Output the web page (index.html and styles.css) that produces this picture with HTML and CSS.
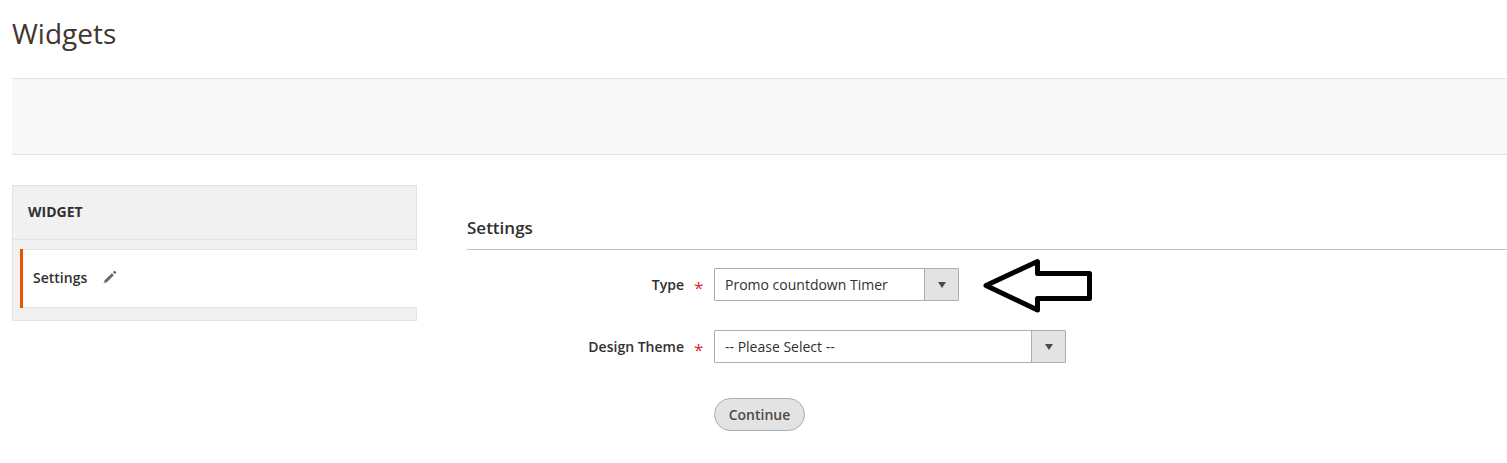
FILE: index.html
```html
<!DOCTYPE html>
<html lang="en">
<head>
<meta charset="utf-8">
<title>Widgets</title>
<link rel="stylesheet" href="styles.css">
</head>
<body>
<header class="page-header"><h1 class="page-title">Widgets</h1></header>
<div class="page-actions"></div>
<div class="columns">
  <nav class="side-nav">
    <div class="side-title">WIDGET</div>
    <a class="side-item">
      <span class="side-label">Settings</span>
      <svg class="pencil" width="14" height="14" viewBox="0 0 14 14"><path d="M0.6 13.4 1.4 10.6 8.9 3.2 10.9 5.2 3.5 12.5ZM9.9 2.2 11 1.1Q11.5.7 12 1.1L13 2.1Q13.4 2.5 13 3L11.900 4.200Z"/><path class="tip" d="M1.2 12.8 1.8 11.2 2.9 12.2Z"/></svg>
    </a>
  </nav>
  <main class="content">
    <h2 class="section-title">Settings</h2>
    <div class="field">
      <label class="label">Type</label><span class="required">*</span>
      <div class="select select-type"><span class="value">Promo countdown Timer</span><span class="toggle"><i class="caret"></i></span></div>
      <svg class="arrow" width="110" height="57" viewBox="0 0 110 57"><path d="M4 29.500 55.500 5.500V17.500H107.500V42.500H55.500V54Z"/></svg>
    </div>
    <div class="field">
      <label class="label">Design Theme</label><span class="required">*</span>
      <div class="select select-theme"><span class="value">-- Please Select --</span><span class="toggle"><i class="caret"></i></span></div>
    </div>
    <button class="continue" type="button">Continue</button>
  </main>
</div>
</body>
</html>
```
FILE: styles.css
```css
* { box-sizing: border-box; }
body {
  margin: 0;
  background: #fff;
  color: #303030;
  font: 14px/20px "Open Sans", sans-serif;
  overflow: hidden;
}
.page-header { height: 78px; padding: 14px 0 0 12px; }
.page-title { margin: 0; font-size: 28px; font-weight: 400; line-height: 38px; color: #41362f; }
.page-actions {
  height: 77px;
  margin-left: 12px;
  background: #f8f8f8;
  border-top: 1px solid #e3e3e3;
  border-bottom: 1px solid #e3e3e3;
}
.columns { display: flex; gap: 50px; padding: 30px 0 0 12px; }
.side-nav {
  width: 405px;
  height: 136px;
  background: #f1f1f1;
  border: 1px solid #e3e3e3;
}
.side-title {
  height: 54px;
  padding: 17px 15px 0;
  border-bottom: 1px solid #e3e3e3;
  font-weight: 700;
  font-size: 14px;
  line-height: 18px;
}
.side-item {
  position: relative;
  display: flex;
  align-items: center;
  height: 59px;
  margin: 9px -1px 0 7px;
  padding: 0 0 2px 13px;
  background: #fff;
  border: solid #e3e3e3;
  border-width: 1px 0;
  font-weight: 600;
}
.side-item::before {
  content: "";
  position: absolute;
  inset: -1px auto -1px 0;
  width: 3px;
  background: #eb5202;
}
.pencil { margin: -1px 0 0 16px; fill: #666; }
.pencil .tip { fill: #fff; }
.content { flex: 1; padding-top: 32px; }
.section-title {
  height: 33px;
  margin: 0 0 18px;
  border-bottom: 1px solid #cac3b4;
  font-size: 17px;
  font-weight: 600;
  line-height: 22px;
}
.field { display: flex; align-items: center; height: 33px; margin-bottom: 29px; }
.label { width: 217px; text-align: right; font-weight: 600; }
.required { width: 30px; padding: 6px 0 0 10px; color: #e22626; font-size: 17px; }
.select {
  display: flex;
  height: 33px;
  border: 1px solid #adadad;
  border-radius: 1px;
}
.select-type { width: 245px; }
.select-theme { width: 352px; }
.value { flex: 1; padding: 6px 0 0 10px; }
.toggle {
  display: flex;
  align-items: center;
  justify-content: center;
  width: 34px;
  background: #e3e3e3;
  border-left: 1px solid #adadad;
}
.caret { border: 4px solid transparent; border-top: 6px solid #514943; border-bottom: 0; }
.arrow { margin-left: 23px; }
.arrow path { fill: none; stroke: #000; stroke-width: 5; stroke-linejoin: round; }
.continue {
  display: block;
  width: 91px;
  height: 33px;
  margin: 35px 0 0 247px;
  padding: 0;
  background: #e3e3e3;
  border: 1px solid #adadad;
  border-radius: 17px;
  color: #514943;
  font: 600 14px/20px "Open Sans", sans-serif;
}
```
